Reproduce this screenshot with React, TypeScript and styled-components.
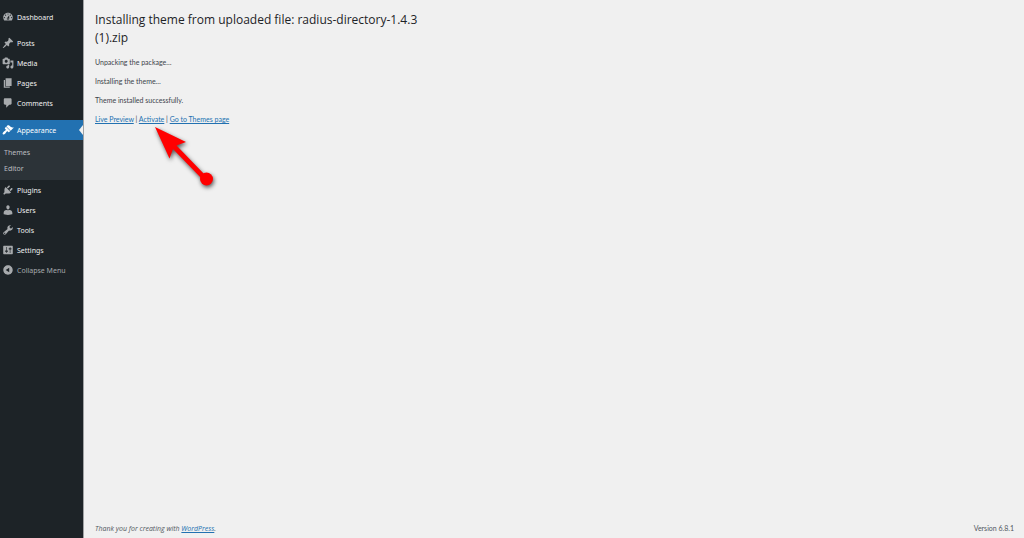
import React from "react";
import styled, { createGlobalStyle } from "styled-components";

const GlobalStyle = createGlobalStyle`
  *, *::before, *::after { box-sizing: border-box; }
  body {
    margin: 0;
    background: #f0f0f0;
    color: #3c434a;
    font-family: "Noto Sans", "Open Sans", sans-serif;
    font-size: 7px;
    line-height: 11px;
  }
`;

const Page = styled.div`
  display: flex;
  min-height: 100vh;
`;

const Sidebar = styled.nav`
  flex: none;
  width: 84px;
  padding-top: 7px;
  background: #1d2327;
  border-right: 1px solid #a0a2a4;
`;

const Menu = styled.ul`
  list-style: none;
  margin: 0;
  padding: 0;
`;

const MenuItem = styled.li<{ $gap?: number }>`
  margin-top: ${(p) => p.$gap ?? 0}px;
`;

const MenuLink = styled.a<{ $current?: boolean }>`
  position: relative;
  display: flex;
  align-items: center;
  gap: 3px;
  height: 20px;
  padding-left: 2px;
  color: ${(p) => (p.$current ? "#ffffff" : "#f0f0f1")};
  background: ${(p) => (p.$current ? "#2271b1" : "transparent")};
  text-decoration: none;
  white-space: nowrap;

  svg { color: ${(p) => (p.$current ? "#ffffff" : "#a7aaad")}; }
`;

const Pointer = styled.span`
  position: absolute;
  right: 0;
  top: 5px;
  border: 5px solid transparent;
  border-left-width: 0;
  border-right: 4px solid #f0f0f0;
`;

const Submenu = styled.ul`
  list-style: none;
  margin: 0;
  padding: 5px 0 3px;
  background: #2c3338;
`;

const SubmenuLink = styled.a`
  display: block;
  padding: 0 4px;
  line-height: 16px;
  color: #bbbec1;
  text-decoration: none;
`;

const CollapseButton = styled.button`
  display: flex;
  align-items: center;
  gap: 3px;
  width: 100%;
  height: 20px;
  padding: 0 0 0 2px;
  border: 0;
  background: none;
  color: #a7aaad;
  font: inherit;
  white-space: nowrap;
`;

const Icon = styled.svg`
  flex: none;
  width: 12px;
  height: 12px;
  fill: currentColor;
`;

const Content = styled.div`
  position: relative;
  flex: 1;
  display: flex;
  flex-direction: column;
  padding: 11px 10px 4px 11px;
  font-family: Lato, "Open Sans", sans-serif;
`;

const Main = styled.main`
  flex: 1;
`;

const Title = styled.h1`
  margin: 0 0 10px;
  color: #1d2327;
  font-family: "Open Sans", sans-serif;
  font-size: 12px;
  font-weight: 400;
  line-height: 18px;
`;

const Message = styled.p`
  margin: 0 0 8px;
`;

const Link = styled.a`
  color: #2271b1;
  text-decoration: underline;
`;

const Footer = styled.footer`
  display: flex;
  justify-content: space-between;
  color: #50575e;
`;

const Credit = styled.em`
  font-family: "Open Sans", sans-serif;
`;

const ArrowMark = styled.svg`
  position: absolute;
  left: 66px;
  top: 122px;
  width: 72px;
  height: 72px;
  filter: drop-shadow(1px 2px 2px rgba(0, 0, 0, 0.65));
`;

type Entry = { label: string; path: string; gap?: number; children?: string[] };

const entries: Entry[] = [
  {
    label: "Dashboard",
    path: "M3.76 16h12.48c1.1-1.37 1.76-3.11 1.76-5 0-4.42-3.58-8-8-8s-8 3.58-8 8c0 1.89.66 3.63 1.76 5zM10 4c.55 0 1 .45 1 1s-.45 1-1 1-1-.45-1-1 .45-1 1-1zM6 6c.55 0 1 .45 1 1s-.45 1-1 1-1-.45-1-1 .45-1 1-1zm8 0c.55 0 1 .45 1 1s-.45 1-1 1-1-.45-1-1 .45-1 1-1zm-5.37 5.55L12 7v6c0 1.1-.9 2-2 2s-2-.9-2-2c0-.57.24-1.08.63-1.45zM4 10c.55 0 1 .45 1 1s-.45 1-1 1-1-.45-1-1 .45-1 1-1zm12 0c.55 0 1 .45 1 1s-.45 1-1 1-1-.45-1-1 .45-1 1-1zm-5 3c0-.55-.45-1-1-1s-1 .45-1 1 .45 1 1 1 1-.45 1-1z",
  },
  {
    label: "Posts",
    gap: 6,
    path: "M10.44 3.02l1.82-1.82 6.36 6.35-1.83 1.82c-1.05-.68-2.48-.57-3.41.36l-.75.75c-.92.93-1.04 2.35-.35 3.41l-1.83 1.82-2.41-2.41-2.8 2.79c-.42.42-3.38 2.71-3.8 2.29s1.86-3.39 2.28-3.81l2.79-2.79L4.1 9.36l1.83-1.82c1.05.69 2.48.57 3.4-.36l.75-.75c.93-.92 1.05-2.35.36-3.41z",
  },
  {
    label: "Media",
    path: "M13 11V4c0-.55-.45-1-1-1h-1.67L9 1H5L3.67 3H2c-.55 0-1 .45-1 1v7c0 .55.45 1 1 1h10c.55 0 1-.45 1-1zM7 4.5c1.38 0 2.5 1.12 2.5 2.5S8.38 9.5 7 9.5 4.5 8.38 4.5 7 5.62 4.5 7 4.5zM14 6h5v10.5c0 1.38-1.12 2.5-2.5 2.5S14 17.88 14 16.5s1.12-2.5 2.5-2.5c.17 0 .34.02.5.05V9h-3V6zm-4 8.05V13h2v3.5c0 1.38-1.12 2.5-2.5 2.5S7 17.88 7 16.5 8.12 14 9.5 14c.17 0 .34.02.5.05z",
  },
  { label: "Pages", path: "M6 15V2h10v13H6zm-1 1h8v2H3V5h2v11z" },
  {
    label: "Comments",
    path: "M5 2h9c1.1 0 2 .9 2 2v7c0 1.1-.9 2-2 2h-2l-5 5v-5H5c-1.1 0-2-.9-2-2V4c0-1.1.9-2 2-2z",
  },
  {
    label: "Appearance",
    gap: 7,
    children: ["Themes", "Editor"],
    path: "M14.48 11.06L7.41 3.99l1.5-1.5c.5-.56 2.3-.47 3.51.32 1.21.8 1.43 1.28 2.91 2.1 1.18.64 2.45 1.26 4.45.85zm-.71.71L6.7 4.7 4.93 6.47c-.39.39-.39 1.02 0 1.41l1.06 1.06c.39.39.39 1.03 0 1.42-.6.6-1.43 1.11-2.21 1.69-.35.26-.7.53-1.01.84C1.43 14.23.4 16.08 1.4 17.07c.99 1 2.84-.03 4.18-1.36.31-.31.58-.66.85-1.02.57-.78 1.08-1.61 1.69-2.21.39-.39 1.02-.39 1.41 0l1.06 1.06c.39.39 1.02.39 1.41 0z",
  },
  {
    label: "Plugins",
    path: "M13.11 4.36L9.87 7.6 8 5.73l3.24-3.24c.35-.34 1.05-.2 1.56.32.52.51.66 1.21.31 1.55zm-8 1.77l.91-1.12 9.01 9.01-1.19.84c-.71.71-2.63 1.16-3.82 1.16H6.14L4.9 17.26c-.59.59-1.54.59-2.12 0-.59-.58-.59-1.53 0-2.12l1.24-1.24v-3.88c0-1.13.4-3.19 1.09-3.89zm7.26 3.97l3.24-3.24c.34-.35 1.04-.21 1.55.31.52.51.66 1.21.31 1.55l-3.24 3.25z",
  },
  {
    label: "Users",
    path: "M10 9.25c-2.27 0-2.73-3.44-2.73-3.44C7 4.02 7.82 2 9.97 2c2.16 0 2.98 2.02 2.71 3.81 0 0-.41 3.44-2.68 3.44zm0 1.25L12.72 10c2.39 0 4.52 2.33 4.52 4.53v2.49s-3.65 1.13-7.24 1.13c-3.65 0-7.24-1.13-7.24-1.13v-2.49c0-2.25 1.94-4.48 4.47-4.48z",
  },
  {
    label: "Tools",
    path: "M16.68 9.77c-1.34 1.34-3.3 1.67-4.95.99l-5.41 6.52c-.99.99-2.59.99-3.58 0s-.99-2.59 0-3.57l6.52-5.42c-.68-1.65-.35-3.61.99-4.95 1.28-1.28 3.12-1.62 4.72-1.06l-2.89 2.89 2.82 2.82 2.86-2.87c.53 1.58.18 3.39-1.08 4.65zM3.81 16.21c.4.39 1.04.39 1.43 0 .4-.4.4-1.04 0-1.43-.39-.4-1.03-.4-1.43 0-.39.39-.39 1.03 0 1.43z",
  },
  {
    label: "Settings",
    path: "M18 16V4c0-.55-.45-1-1-1H3c-.55 0-1 .45-1 1v12c0 .55.45 1 1 1h14c.55 0 1-.45 1-1zM8 11h1c.55 0 1 .45 1 1s-.45 1-1 1H8v1.5c0 .28-.22.5-.5.5s-.5-.22-.5-.5V13H6c-.55 0-1-.45-1-1s.45-1 1-1h1V5.5c0-.28.22-.5.5-.5s.5.22.5.5V11zm5-2h-1c-.55 0-1-.45-1-1s.45-1 1-1h1V5.5c0-.28.22-.5.5-.5s.5.22.5.5V7h1c.55 0 1 .45 1 1s-.45 1-1 1h-1v5.5c0 .28-.22.5-.5.5s-.5-.22-.5-.5V9z",
  },
];

const collapsePath =
  "M10 2.16c4.33 0 7.84 3.51 7.84 7.84s-3.51 7.84-7.84 7.84S2.16 14.33 2.16 10 5.71 2.16 10 2.16zm2 11.72V6.12L6.18 9.97z";

const MenuIcon = ({ path }: { path: string }) => (
  <Icon viewBox="0 0 20 20" aria-hidden="true">
    <path d={path} />
  </Icon>
);

export default function App() {
  return (
    <>
      <GlobalStyle />
      <Page>
        <Sidebar aria-label="Main menu">
          <Menu>
            {entries.map((entry) => (
              <MenuItem key={entry.label} $gap={entry.gap}>
                <MenuLink href="#" $current={!!entry.children}>
                  <MenuIcon path={entry.path} />
                  {entry.label}
                  {entry.children && <Pointer />}
                </MenuLink>
                {entry.children && (
                  <Submenu>
                    {entry.children.map((child) => (
                      <li key={child}>
                        <SubmenuLink href="#">{child}</SubmenuLink>
                      </li>
                    ))}
                  </Submenu>
                )}
              </MenuItem>
            ))}
          </Menu>
          <CollapseButton type="button">
            <MenuIcon path={collapsePath} />
            Collapse Menu
          </CollapseButton>
        </Sidebar>
        <Content>
          <Main>
            <Title>
              Installing theme from uploaded file: radius-directory-1.4.3
              <br />
              (1).zip
            </Title>
            <Message>Unpacking the package…</Message>
            <Message>Installing the theme…</Message>
            <Message>Theme installed successfully.</Message>
            <Message>
              <Link href="#">Live Preview</Link> | <Link href="#">Activate</Link> |{" "}
              <Link href="#">Go to Themes page</Link>
            </Message>
          </Main>
          <Footer>
            <Credit>
              Thank you for creating with <Link href="#">WordPress</Link>.
            </Credit>
            <span>Version 6.8.1</span>
          </Footer>
          <ArrowMark viewBox="150 122 72 72" aria-hidden="true">
            <path d="M155 127L186 142L176.500 145.500L206 176L203 180L173 149L169.500 158.500Z" fill="#ff0000" />
            <circle cx="206.500" cy="179" r="6.500" fill="#ff0000" />
          </ArrowMark>
        </Content>
      </Page>
    </>
  );
}
